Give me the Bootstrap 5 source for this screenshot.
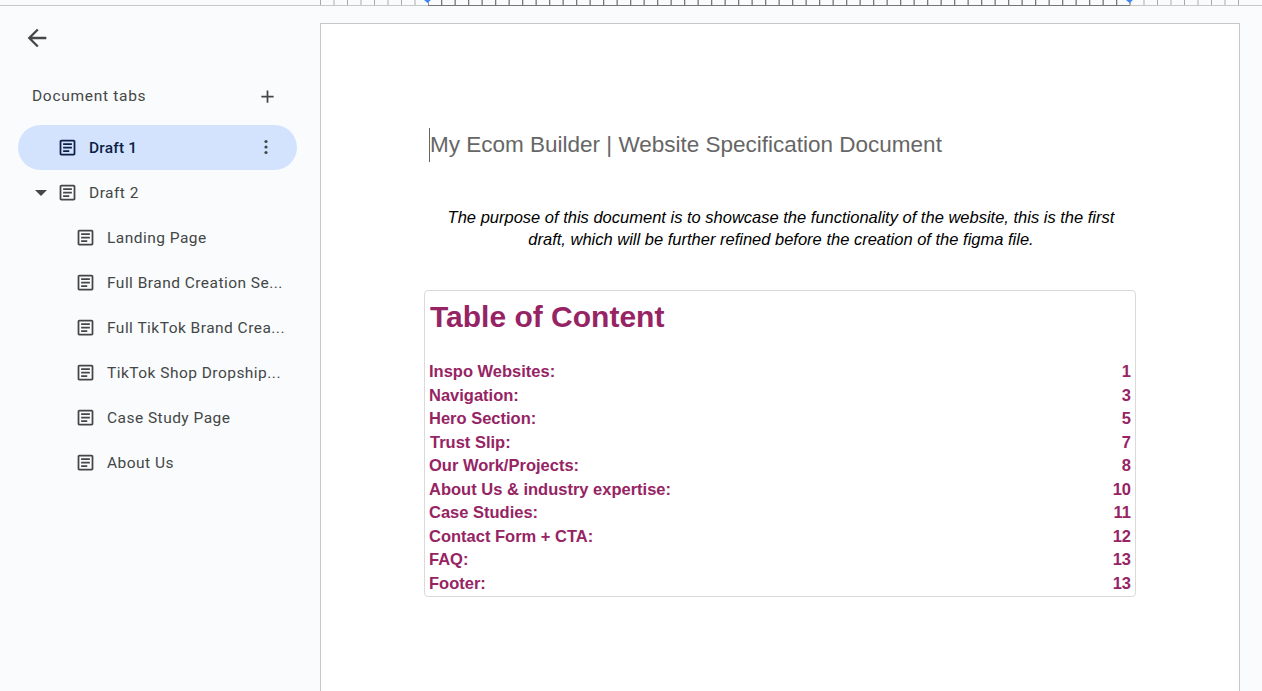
<!DOCTYPE html>
<html lang="en">
<head>
  <meta charset="UTF-8">
  <title>My Ecom Builder | Website Specification Document</title>
  <meta name="viewport" content="width=device-width, initial-scale=1">
  <link href="https://cdn.jsdelivr.net/npm/bootstrap@5.3.0/dist/css/bootstrap.min.css" rel="stylesheet">
  <style>
    html, body { height: 100%; }
    body { background-color: #f9fbfd; overflow: hidden; font-family: Roboto, sans-serif; }
    .top-ruler { height: 6px; border-bottom: 1px solid #c7c7c7; }
    .ruler-scale {
      margin-left: 320px; width: 919px; height: 5px; position: relative;
      background-image: linear-gradient(to right, #a8a8a8 1px, transparent 1px);
      background-size: 13.5px 100%;
    }
    .ruler-live { position: absolute; left: 108px; top: 0; width: 702px; height: 6px; border-bottom: 1px solid #747775;
      background-image: linear-gradient(to right, #747775 1px, transparent 1px);
      background-size: 13.5px 100%; background-position: -0.5px 0; }
    .ruler-pin { position: absolute; top: 0; width: 7px; height: 3px; background: #4285f4; clip-path: polygon(0 0, 100% 0, 50% 100%); }
    .side-panel { width: 320px; flex-shrink: 0; }
    .back-btn { height: 20px; margin: 18px 0 0 23px; }
    .tabs-head { margin: 40px 0 0 32px; width: 246px; height: 24px; color: #444746; font-size: 15.5px; letter-spacing: .7px; }
    .tab-list { margin: 17px 0 0 18px; width: 279px; }
    .tab-row { height: 45px; border-radius: 23px; color: #444746; font-size: 15.5px; letter-spacing: .47px; white-space: nowrap; }
    .tab-row.is-active { background: #d3e3fd; color: #0b1f47; font-weight: 500; letter-spacing: .2px; }
    .tab-row.lvl-1 { padding-left: 39px; }
    .tab-row.lvl-2 { padding-left: 57px; }
    .tab-row .doc-ico { margin-right: 11px; flex-shrink: 0; }
    .tab-label, .head-label { padding-top: 2px; }
    .tab-caret { position: absolute; left: 17px; top: 20px; }
    .tab-kebab { position: absolute; right: 21px; top: 12px; }
    .doc-page { width: 920px; height: 680px; margin-top: 17px; background: #fff; border: 1px solid #c7c7c7; border-bottom: 0; padding: 0 103px; font-family: "Liberation Sans", Arial, sans-serif; }
    .doc-title { margin: 104px 0 0 5px; height: 34px; font-size: 22.5px; line-height: 34px; color: #666; font-weight: 400; border-left: 1px solid #666; }
    .doc-intro { margin: 44px 0 0; font-size: 16.5px; line-height: 22px; font-style: italic; color: #000; text-align: center; padding: 0 19px 0 21px; }
    .toc-box { margin-top: 40px; width: 712px; height: 307px; border: 1px solid #dadada; border-radius: 4px; color: #962464; font-weight: 700; padding: 0 4px; }
    .toc-heading { font-size: 30px; line-height: 36px; font-weight: 700; margin: 8px 0 0 1px; }
    .toc-rows { margin-top: 25px; font-size: 16.5px; line-height: 23.55px; }
    .toc-shift { padding-left: 1px; }
  </style>
</head>
<body>
  <svg width="0" height="0" class="d-block position-absolute">
    <symbol id="docIcon" viewBox="0 0 24 24"><path d="M19 5v14H5V5h14m0-2H5c-1.1 0-2 .9-2 2v14c0 1.1.9 2 2 2h14c1.1 0 2-.9 2-2V5c0-1.1-.9-2-2-2zM14 17H7v-2h7v2zm3-4H7v-2h10v2zm0-4H7V7h10v2z" fill="currentColor"/></symbol>
  </svg>

  <div class="top-ruler">
    <div class="ruler-scale">
      <div class="ruler-live"></div>
      <span class="ruler-pin" style="left:104px"></span>
      <span class="ruler-pin" style="left:806px"></span>
    </div>
  </div>

  <div class="d-flex">
    <!-- tabs panel -->
    <div class="side-panel">
      <div class="back-btn">
        <svg width="28" height="28" viewBox="0 0 24 24" class="d-block"><path d="M20 11H7.83l5.59-5.59L12 4l-8 8 8 8 1.41-1.41L7.83 13H20v-2z" fill="#444746"/></svg>
      </div>
      <div class="tabs-head d-flex align-items-center justify-content-between">
        <span class="head-label">Document tabs</span>
        <svg width="21" height="21" viewBox="0 0 24 24"><path d="M19 13h-6v6h-2v-6H5v-2h6V5h2v6h6v2z" fill="#444746"/></svg>
      </div>
      <div class="tab-list">
        <div class="tab-row is-active lvl-1 d-flex align-items-center position-relative">
          <svg class="doc-ico" width="21" height="21"><use href="#docIcon"/></svg><span class="tab-label">Draft 1</span>
          <svg class="tab-kebab" width="20" height="20" viewBox="0 0 20 20"><circle cx="10" cy="4.5" r="1.6" fill="#444746"/><circle cx="10" cy="10" r="1.6" fill="#444746"/><circle cx="10" cy="15.5" r="1.6" fill="#444746"/></svg>
        </div>
        <div class="tab-row lvl-1 d-flex align-items-center position-relative">
          <svg class="tab-caret" width="12" height="6" viewBox="0 0 12 6"><path d="M0 0h12L6 6z" fill="#444746"/></svg>
          <svg class="doc-ico" width="21" height="21"><use href="#docIcon"/></svg><span class="tab-label">Draft 2</span>
        </div>
        <div class="tab-row lvl-2 d-flex align-items-center"><svg class="doc-ico" width="21" height="21"><use href="#docIcon"/></svg><span class="tab-label">Landing Page</span></div>
        <div class="tab-row lvl-2 d-flex align-items-center"><svg class="doc-ico" width="21" height="21"><use href="#docIcon"/></svg><span class="tab-label">Full Brand Creation Se...</span></div>
        <div class="tab-row lvl-2 d-flex align-items-center"><svg class="doc-ico" width="21" height="21"><use href="#docIcon"/></svg><span class="tab-label">Full TikTok Brand Crea...</span></div>
        <div class="tab-row lvl-2 d-flex align-items-center"><svg class="doc-ico" width="21" height="21"><use href="#docIcon"/></svg><span class="tab-label">TikTok Shop Dropship...</span></div>
        <div class="tab-row lvl-2 d-flex align-items-center"><svg class="doc-ico" width="21" height="21"><use href="#docIcon"/></svg><span class="tab-label">Case Study Page</span></div>
        <div class="tab-row lvl-2 d-flex align-items-center"><svg class="doc-ico" width="21" height="21"><use href="#docIcon"/></svg><span class="tab-label">About Us</span></div>
      </div>
    </div>

    <!-- document page -->
    <div class="doc-page">
      <h1 class="doc-title">My Ecom Builder | Website Specification Document</h1>
      <p class="doc-intro">The purpose of this document is to showcase the functionality of the website, this is the first draft, which will be further refined before the creation of the figma file.</p>
      <div class="toc-box">
        <h2 class="toc-heading">Table of Content</h2>
        <div class="toc-rows">
          <div class="d-flex justify-content-between"><span>Inspo Websites:</span><span>1</span></div>
          <div class="d-flex justify-content-between"><span>Navigation:</span><span>3</span></div>
          <div class="d-flex justify-content-between"><span>Hero Section:</span><span>5</span></div>
          <div class="d-flex justify-content-between toc-shift"><span>Trust Slip:</span><span>7</span></div>
          <div class="d-flex justify-content-between"><span>Our Work/Projects:</span><span>8</span></div>
          <div class="d-flex justify-content-between"><span>About Us &amp; industry expertise:</span><span>10</span></div>
          <div class="d-flex justify-content-between"><span>Case Studies:</span><span>11</span></div>
          <div class="d-flex justify-content-between"><span>Contact Form + CTA:</span><span>12</span></div>
          <div class="d-flex justify-content-between"><span>FAQ:</span><span>13</span></div>
          <div class="d-flex justify-content-between"><span>Footer:</span><span>13</span></div>
        </div>
      </div>
    </div>
  </div>

  <script src="https://cdn.jsdelivr.net/npm/bootstrap@5.3.0/dist/js/bootstrap.bundle.min.js"></script>
</body>
</html>
